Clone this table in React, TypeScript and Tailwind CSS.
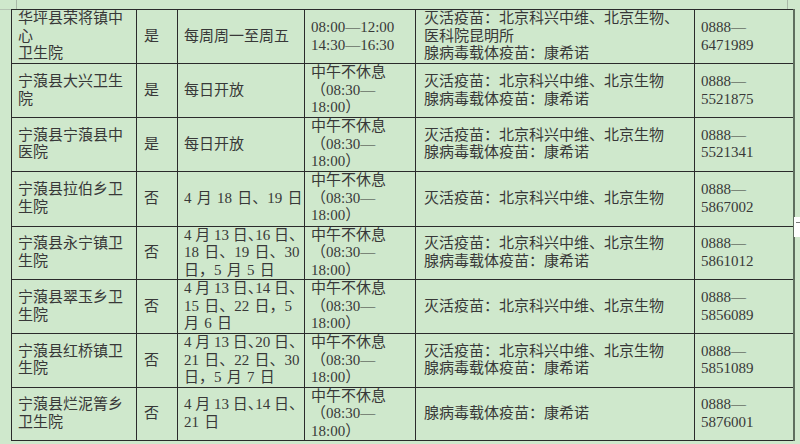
const noon = ["中午不休息", "（08:30—", "18:00）"];
const both = ["灭活疫苗：北京科兴中维、北京生物", "腺病毒载体疫苗：康希诺"];
const inact = ["灭活疫苗：北京科兴中维、北京生物"];

type Row = {
  h: string;
  name: string[];
  open: string;
  days: string[];
  hours: string[];
  vac: string[];
  tel: string;
};

const rows: Row[] = [
  {
    h: "h-[54px]",
    name: ["华坪县荣将镇中", "心", "卫生院"],
    open: "是",
    days: ["每周周一至周五"],
    hours: ["08:00—12:00", "14:30—16:30"],
    vac: ["灭活疫苗：北京科兴中维、北京生物、", "医科院昆明所", "腺病毒载体疫苗：康希诺"],
    tel: "6471989",
  },
  { h: "h-[54px]", name: ["宁蒗县大兴卫生", "院"], open: "是", days: ["每日开放"], hours: noon, vac: both, tel: "5521875" },
  { h: "h-[53px]", name: ["宁蒗县宁蒗县中", "医院"], open: "是", days: ["每日开放"], hours: noon, vac: both, tel: "5521341" },
  { h: "h-[55px]", name: ["宁蒗县拉伯乡卫", "生院"], open: "否", days: ["4 月 18 日、19 日"], hours: noon, vac: inact, tel: "5867002" },
  {
    h: "h-[53px]",
    name: ["宁蒗县永宁镇卫", "生院"],
    open: "否",
    days: ["4 月 13 日、16 日、", "18 日、19 日、30", "日，5 月 5 日"],
    hours: noon,
    vac: both,
    tel: "5861012",
  },
  {
    h: "h-[54px]",
    name: ["宁蒗县翠玉乡卫", "生院"],
    open: "否",
    days: ["4 月 13 日、14 日、", "15 日、22 日，5", "月 6 日"],
    hours: noon,
    vac: inact,
    tel: "5856089",
  },
  {
    h: "h-[53px]",
    name: ["宁蒗县红桥镇卫", "生院"],
    open: "否",
    days: ["4 月 13 日、20 日、", "21 日、22 日、30", "日，5 月 7 日"],
    hours: noon,
    vac: both,
    tel: "5851089",
  },
  {
    h: "h-[52px]",
    name: ["宁蒗县烂泥箐乡", "卫生院"],
    open: "否",
    days: ["4 月 13 日、14 日、", "21 日"],
    hours: noon,
    vac: ["腺病毒载体疫苗：康希诺"],
    tel: "5876001",
  },
];

const Lines = ({ lines }: { lines: string[] }) => (
  <>
    {lines.map((l, i) => (
      <div key={i} className="whitespace-nowrap">
        {l}
      </div>
    ))}
  </>
);

// dates column: the crowded first line gets half-width punctuation, the rest wider spaces
const Days = ({ lines }: { lines: string[] }) => (
  <>
    {lines.map((l, i) =>
      i === 0 && lines.length > 1 ? (
        <div key={i} className="whitespace-nowrap [font-feature-settings:'halt']">
          {l}
        </div>
      ) : (
        <div key={i} className="whitespace-nowrap [word-spacing:1.5px]">
          {l}
        </div>
      )
    )}
  </>
);

const cell = "border border-[#2b2b2b] align-middle p-0";

export default function App() {
  return (
    <div className="relative w-[800px] h-[444px] overflow-hidden bg-[#cfe8cc] font-['Liberation_Serif','Noto_Sans_CJK_SC',serif] text-[15px] leading-[17.5px] text-[#383838]">
      {/* spreadsheet gridlines peeking out */}
      <div className="absolute left-[16px] top-0 h-[9px] w-px bg-[#a9b8a7]" />
      <div className="absolute left-0 top-[9px] h-px w-[11px] bg-[#b5c4b3]" />
      <div className="absolute left-[787px] top-0 h-[9px] w-px bg-[#a9b8a7]" />
      <div className="absolute left-[794px] top-[217px] h-[20px] w-[6px] bg-white">
        <div className="mt-[5px] ml-[2px] h-px w-[4px] bg-[#777]" />
      </div>

      <div className="pl-[11px] pt-[9px]">
        <table className="table-fixed border-collapse">
          <colgroup>
            <col className="w-[125px]" />
            <col className="w-[41px]" />
            <col className="w-[127px]" />
            <col className="w-[111px]" />
            <col className="w-[279px]" />
            <col className="w-[99px]" />
          </colgroup>
          <tbody>
            {rows.map((r, i) => (
              <tr key={i} className={r.h}>
                <td className={`${cell} pl-[6px]`}>
                  <Lines lines={r.name} />
                </td>
                <td className={`${cell} pl-[7px]`}>{r.open}</td>
                <td className={`${cell} pl-[6px]`}>
                  <Days lines={r.days} />
                </td>
                <td className={`${cell} pl-[6px]`}>
                  <Lines lines={r.hours} />
                </td>
                <td className={`${cell} pl-[8px]`}>
                  <Lines lines={r.vac} />
                </td>
                <td className={`${cell} pl-[6px] border-r-2 border-r-[#5f6e5e]`}>
                  <div>0888—</div>
                  <div>{r.tel}</div>
                </td>
              </tr>
            ))}
          </tbody>
        </table>
      </div>
    </div>
  );
}
